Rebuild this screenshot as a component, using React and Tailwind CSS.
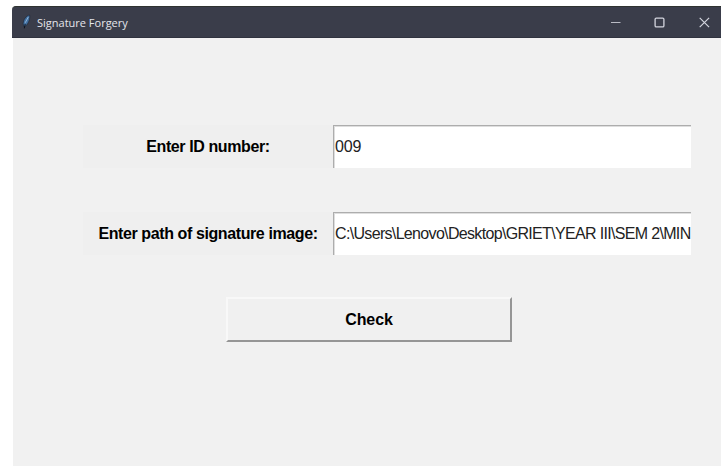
import React from 'react';

function TitleBar() {
  return (
    <header className="flex h-8 items-center rounded-tl-[4px] border-t border-b border-t-[#2f3331] border-b-[#30333f] bg-[#3a3d4a] pl-[10px] text-[#e4e5ea]">
      <svg className="h-4 w-[9px] shrink-0" viewBox="0 0 9 16">
        <path d="M7.6 1C4.4 1.6 1.3 5.4 1.2 9.6L1.7 12.8L3.6 12C6.4 9.6 8.4 5 7.6 1Z" fill="#426f9f" stroke="#1b2230" strokeWidth="0.6" />
        <path d="M6.3 3L3.2 8.8" stroke="#8fb4d6" strokeWidth="1" />
        <path d="M3.2 10L2.3 14.4" stroke="#11141c" strokeWidth="1" />
      </svg>
      <span className="ml-[6px] flex-1 whitespace-nowrap pt-[2px] font-['Open_Sans',sans-serif] text-[11px] leading-4">Signature Forgery</span>
      <svg className="h-5 w-[110px] shrink-0" viewBox="0 0 110 20" fill="none" stroke="#d3d5de">
        <path d="M0 10.5H9.5" strokeWidth="1" stroke="#b9bbc4" />
        <rect x="44.1" y="6.1" width="8.8" height="8.8" rx="1.2" strokeWidth="1.3" />
        <path d="M88.7 5.8L98.1 15.2M98.1 5.8L88.7 15.2" strokeWidth="1.2" />
      </svg>
    </header>
  );
}

function Field({ label, value, spacing, tracking }) {
  return (
    <div className={`flex h-[43px] ${spacing}`}>
      <label className="flex w-[250px] items-center justify-center whitespace-nowrap bg-[#efefef] text-[16px] font-bold tracking-[-0.4px] text-black">{label}</label>
      <div className={`flex w-[358px] items-center overflow-hidden whitespace-nowrap border-t border-l border-[#adadad] bg-white pl-px text-[16px] text-[#222] shadow-[inset_1px_1px_0_#dedede] ${tracking}`}>
        {value}
      </div>
    </div>
  );
}

export default function App() {
  return (
    <div className="h-[471px] w-[721px] overflow-hidden bg-white pt-[6px] pl-3 font-['Liberation_Sans',Arial,sans-serif]">
      <TitleBar />
      <main className="ml-px h-[428px] bg-[#f1f1f1] pt-[87px] pl-[70px]">
        <Field label="Enter ID number:" value="009" spacing="mb-11" tracking="tracking-[-0.1px]" />
        <Field label="Enter path of signature image:" value={'C:\\Users\\Lenovo\\Desktop\\GRIET\\YEAR III\\SEM 2\\MIN'} spacing="mb-[42px]" tracking="tracking-[-0.67px]" />
        <button className="ml-[143px] flex h-[45px] w-[286px] items-center justify-center border-2 border-t-[#f8f8f8] border-r-[#969696] border-b-[#969696] border-l-[#f8f8f8] bg-[#f0f0f0] text-[16px] font-bold tracking-[-0.1px] text-black">
          Check
        </button>
      </main>
    </div>
  );
}
